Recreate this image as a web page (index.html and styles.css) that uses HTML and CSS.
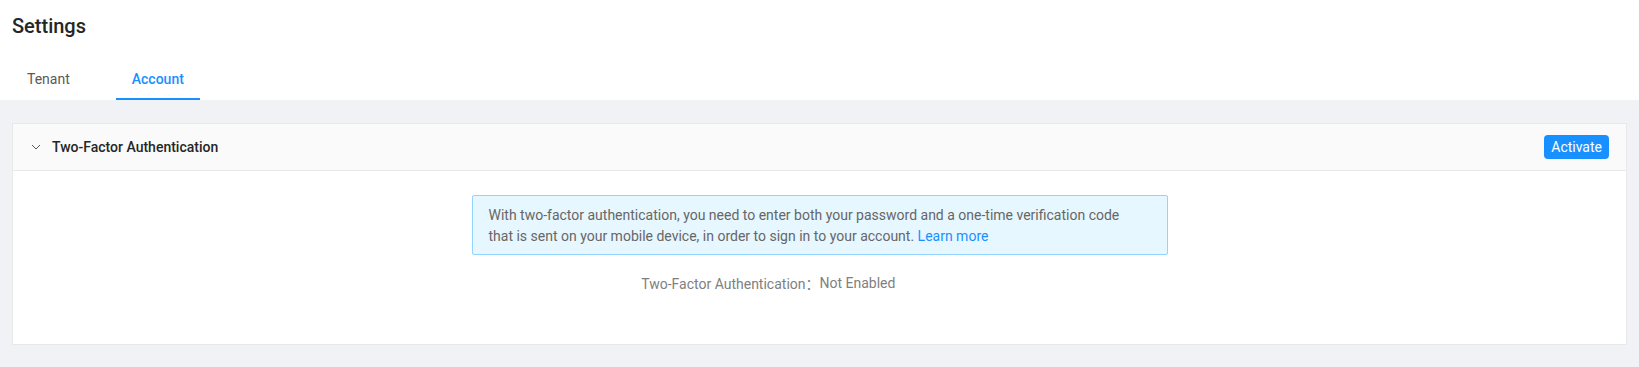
FILE: index.html
```html
<!DOCTYPE html>
<html lang="en">

<head>
    <meta charset="UTF-8">
    <meta name="viewport" content="width=device-width, initial-scale=1.0">
    <title>Settings</title>
    <link rel="stylesheet" href="styles.css">
</head>

<body>
    <div class="page-header">
        <h1 class="page-title">Settings</h1>
        <div class="tabs">
            <div class="tab">Tenant</div>
            <div class="tab active">Account</div>
        </div>
    </div>

    <div class="content">
        <div class="card">
            <div class="card-head">
                <svg class="chevron" width="12" height="12" viewBox="0 0 12 12">
                    <path d="M2 4 L6 8 L10 4" fill="none" stroke="#595959" stroke-width="1" />
                </svg>
                <span class="card-title">Two-Factor Authentication</span>
                <button class="btn-primary">Activate</button>
            </div>
            <div class="card-body">
                <div class="info-box">
                    With two-factor authentication, you need to enter both your password and a one-time verification code<br>
                    that is sent on your mobile device, in order to sign in to your account. <a href="#">Learn more</a>
                </div>
                <div class="status-row">
                    <span class="status-label">Two-Factor Authentication<span class="colon" lang="zh-CN">：</span></span>
                    <span class="status-value">Not Enabled</span>
                </div>
            </div>
        </div>
    </div>
</body>

</html>
```
FILE: styles.css
```css
/* Base */
body {
    margin: 0;
    font-family: Roboto, "Noto Sans", sans-serif;
    font-size: 14px;
    color: #595959;
    background-color: #f0f2f5;
}

/* Header + tabs */
.page-header {
    background-color: #ffffff;
    padding: 12px 12px 0 11px;
}

.page-title {
    margin: 0 0 12px 1px;
    font-size: 20px;
    line-height: 28px;
    font-weight: 500;
    color: #262626;
}

.tabs {
    display: flex;
    gap: 30px;
}

.tab {
    padding: 17px 16px 9px;
    line-height: 20px;
    color: #595959;
    border-bottom: 2px solid transparent;
}

.tab.active {
    color: #1890ff;
    font-weight: 500;
    border-bottom-color: #1890ff;
}

/* Content */
.content {
    padding: 23px 12px 24px;
}

.card {
    background-color: #ffffff;
    border: 1px solid #e8e8e8;
}

.card-head {
    display: flex;
    align-items: center;
    padding: 11px 17px 11px 17px;
    background-color: #fafafa;
    border-bottom: 1px solid #e8e8e8;
}

.chevron {
    margin-right: 10px;
}

.card-title {
    flex: 1;
    font-weight: 500;
    color: #262626;
    line-height: 24px;
}

.btn-primary {
    height: 24px;
    padding: 0 7px;
    font-family: inherit;
    font-size: 14px;
    color: #ffffff;
    background-color: #1890ff;
    border: none;
    border-radius: 4px;
}

.card-body {
    padding: 24px 16px 24px;
    display: flex;
    flex-direction: column;
    align-items: center;
}

.info-box {
    width: 662px;
    padding: 9px 16px 7px;
    line-height: 21px;
    color: #666666;
    background-color: #e6f7ff;
    border: 1px solid #91d5ff;
    border-radius: 2px;
}

.info-box a {
    color: #1890ff;
    text-decoration: none;
}

.status-row {
    align-self: stretch;
    display: grid;
    grid-template-columns: 1fr 1fr;
    margin-top: 18px;
    margin-bottom: 25px;
    line-height: 21px;
    color: #808080;
}

.status-label {
    text-align: right;
}

.colon {
    font-family: "Noto Sans CJK SC", sans-serif;
}
```
